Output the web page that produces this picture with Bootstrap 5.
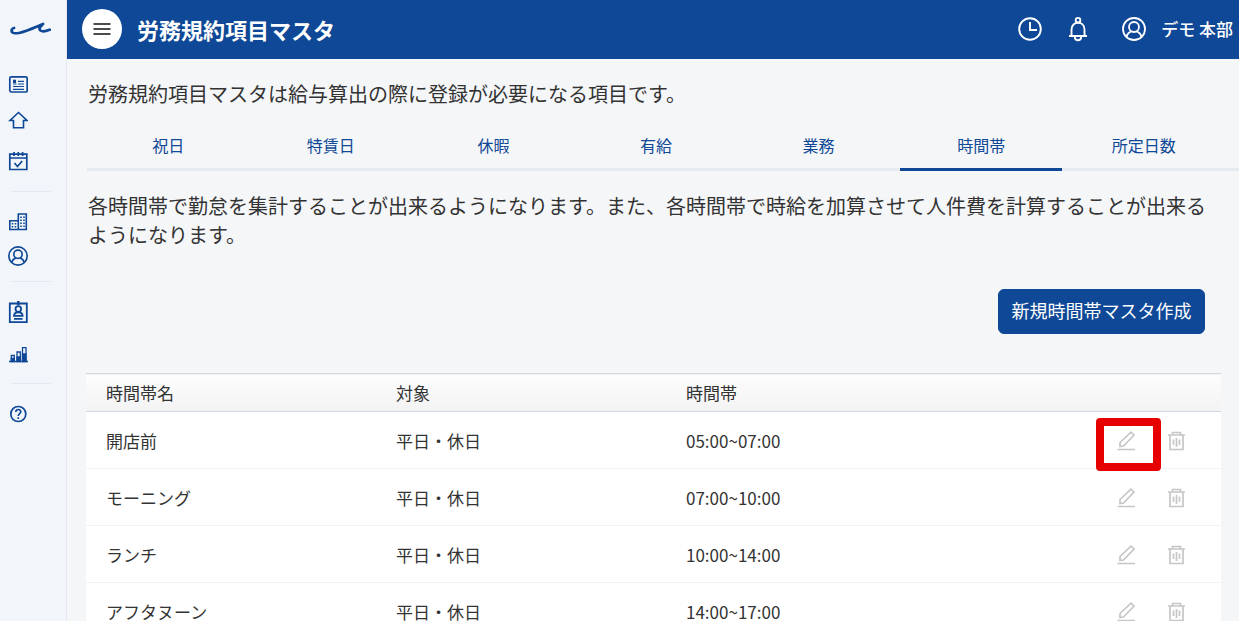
<!DOCTYPE html>
<html lang="ja">
<head>
<meta charset="utf-8">
<meta name="viewport" content="width=device-width, initial-scale=1">
<title>労務規約項目マスタ</title>
<link href="https://cdn.jsdelivr.net/npm/bootstrap@5.3.0/dist/css/bootstrap.min.css" rel="stylesheet">
<style>
  :root { --brand: #0e4896; --ink: #333; --page: #f5f6f8; }
  body { font-family: "Noto Sans CJK JP", "Noto Sans", sans-serif; color: var(--ink); background: var(--page); }
  svg { display: block; fill: none; stroke: currentColor; }

  .side-rail { width: 67px; background: #f2f6fb; border-right: 1px solid #e3e8f3; color: var(--brand); }
  .side-logo { height: 59px; padding: 0 0 2px 10px; color: var(--brand); }
  .side-group { padding: 9px 0 13px 8px; }
  .side-group + .side-group::before { content: ""; height: 1px; background: #e4e8ee; margin: 0 15px 13px 3px; }
  .side-group + .side-group { padding-top: 0; padding-bottom: 8px; }
  .side-group.roomy { padding-bottom: 12px; }
  .side-link { height: 34px; color: var(--brand); }

  .app-bar { height: 59px; background: var(--brand); color: #fff; padding: 0 6px 2px 15px; }
  .menu-btn { width: 40px; height: 40px; background: #fff; color: #111; }
  .app-title { font-size: 22px; line-height: 32px; margin-left: 15px; }
  .bar-btn { color: #fff; }
  .user-btn { font-size: 17px; line-height: 24px; font-weight: 500; gap: 15px; }

  .page-body { scrollbar-width: none; padding-top: 20px; }
  .page-body::-webkit-scrollbar { display: none; }
  .page-text { font-size: 20px; line-height: 29px; padding: 0 30px 0 21px; }
  .master-tabs { margin: 12px 0 20px 20px; padding-right: 14px; border-bottom: 3px solid #e6ebf2; }
  .master-tabs .nav-link { color: var(--brand); font-size: 16px; line-height: 24px; padding: 13px 0 11px; margin-bottom: -3px; border-bottom: 3px solid transparent; border-radius: 0; }
  .master-tabs .nav-link.active { border-bottom-color: var(--brand); }
  .create-row { margin: 40px 34px 39px 0; }
  .create-btn { --bs-btn-color: #fff; --bs-btn-bg: var(--brand); --bs-btn-hover-color: #fff; --bs-btn-hover-bg: #0b3b7c; font-size: 18px; line-height: 25px; padding: 8px 12px 10px; border: 1px solid var(--brand); border-radius: 6px; width: 207px; }

  .zone-wrap { padding: 0 18px 0 19px; }
  .zone-table { font-size: 17px; line-height: 24px; color: var(--ink); background: #fff; table-layout: fixed; width: 100%; }
  .zone-table th { font-weight: 400; padding: 7px 0 6px 20px; }
  .zone-table thead { background: linear-gradient(#fdfdfe, #f3f3f3); border-top: 1px solid #d0d9e4; border-bottom: 1px solid #d0d9e4; }
  .zone-table td { padding: 17px 0 15px 20px; border-bottom: 1px solid #f2f3f5; }
  .zone-col { width: 290px; }
  .row-tools { height: 24px; gap: 30px; padding-right: 35px; }
  .row-btn { color: #c6c6c6; }
  .callout-box { left: -20px; top: -13px; width: 65px; height: 53px; border: 8px solid #e60000; border-radius: 4px; pointer-events: none; }
</style>
</head>
<body>
<svg class="d-none" aria-hidden="true">
  <symbol id="i-user" viewBox="0 0 24 24"><circle cx="12" cy="12" r="11"/><circle cx="12" cy="10" r="5"/><path d="M4.500 20c.8-3.300 2.600-4.900 4.900-5.600M19.500 20c-.8-3.300-2.600-4.900-4.900-5.600"/></symbol>
  <symbol id="i-edit" viewBox="0 0 20 20"><path d="M1.500 18.500h17.500M4 15.500v-4L15 1.200l3 2.800L7.500 15z"/></symbol>
  <symbol id="i-trash" viewBox="0 0 20 20"><path d="M2 4h17M6.500 3.700V1.500h8v2.200M4 4v14.500h13V4M7.500 8.500v5.500M10.500 7v9M13.500 8.500v5.500"/></symbol>
</svg>
<div class="d-flex vh-100 overflow-hidden">
  <nav class="side-rail flex-shrink-0 d-flex flex-column" aria-label="サイドメニュー">
    <a href="#" class="side-logo d-flex align-items-center" aria-label="トップ">
      <svg width="42" height="16" viewBox="0 0 42 16" stroke-width="2.800" stroke-linecap="round" stroke-linejoin="round"><path d="M4 7C1.500 7.500 1 10 2.500 11.500c2.500 2 8 .3 14-1.800C23 7.300 29 5 33 3c-2 2-5 4.300-2.500 6.500 2 1.500 6 .5 9.200-.7"/></svg>
    </a>
    <div class="side-group d-flex flex-column">
      <a href="#" class="side-link d-flex align-items-center" aria-label="お知らせ">
        <svg width="20" height="20" viewBox="0 0 20 20" stroke-width="1.700"><rect x="1.800" y="1.800" width="17.400" height="15.200" rx="1.500"/><path d="M5 11.500h11M5 14.300h11M10 6.300h6M5 9h3.500M10 9h6" stroke-width="1.200"/><path d="M5 4.700h3v3.300H5z" fill="currentColor" stroke="none"/></svg>
      </a>
      <a href="#" class="side-link d-flex align-items-center" aria-label="ホーム">
        <svg width="20" height="20" viewBox="0 0 20 20" stroke-width="1.600"><path d="M10.500 3.500 2 11.500h3.500v7.300h10v-7.300H19z"/></svg>
      </a>
      <a href="#" class="side-link d-flex align-items-center mt-2" aria-label="スケジュール">
        <svg width="20" height="20" viewBox="0 0 20 20" stroke-width="1.700"><path d="M1.800 3.200h17v15.300h-17zM2 7h16.500M6 1v4M10.300 1v4M14.600 1v4M6.500 12l3 3.500 4.700-5.500"/></svg>
      </a>
    </div>
    <div class="side-group d-flex flex-column">
      <a href="#" class="side-link d-flex align-items-center" aria-label="店舗">
        <svg width="20" height="20" viewBox="0 0 20 20" stroke-width="1.600"><path d="M1.800 8.800h8.500v8.700H1.800zM10.300 2h8v15.500h-8zM1 17.500h18"/><path d="M4.500 11v5M7.500 11v5M13 4.500v11M16 4.500v11" stroke-dasharray="1.500 1.500"/></svg>
      </a>
      <a href="#" class="side-link d-flex align-items-center" aria-label="アカウント">
        <svg width="20" height="20" stroke-width="2"><use href="#i-user"/></svg>
      </a>
    </div>
    <div class="side-group roomy d-flex flex-column">
      <a href="#" class="side-link d-flex align-items-center" aria-label="従業員">
        <svg width="20" height="24" viewBox="0 0 20 24" stroke-width="1.800"><path d="M1.800 3.500h17v18.700h-17z"/><circle cx="10.300" cy="9" r="2.800"/><path d="M6 15.800c0-2.200 1.600-3.500 4.300-3.500s4.300 1.300 4.300 3.500zM6 18.800h8.600"/><path d="M10.300 1v4" stroke-width="2.500"/></svg>
      </a>
      <a href="#" class="side-link d-flex align-items-center mt-2" aria-label="分析">
        <svg width="20" height="20" viewBox="0 0 20 20" stroke-width="1.300"><path d="M1 17.500h19M3.300 11.500h3v6h-3zM9 8h3.300v9.500H9zM14.500 3.700h3.500v13.800h-3.500z"/><path d="M3.300 14.500h3v3h-3zM9 13h3.300v4.500H9zM14.500 10h3.500v7.500h-3.500z" fill="currentColor"/></svg>
      </a>
    </div>
    <div class="side-group d-flex flex-column">
      <a href="#" class="side-link d-flex align-items-center" aria-label="ヘルプ">
        <svg width="20" height="20" viewBox="0 0 20 20" stroke-width="1.700"><circle cx="10.300" cy="10" r="7.500"/><path d="M7.800 8c0-3.300 5-3.200 5-.3 0 2-2.500 1.900-2.500 4.300M10.300 13.300V15"/></svg>
      </a>
    </div>
  </nav>

  <div class="flex-grow-1 d-flex flex-column overflow-hidden">
    <header class="app-bar flex-shrink-0 d-flex align-items-center">
      <button type="button" class="menu-btn btn rounded-circle border-0 p-0 d-flex align-items-center justify-content-center" aria-label="メニュー">
        <svg width="18" height="14" viewBox="0 0 18 14" stroke-width="1.500"><path d="M.5 2h17M.5 7h17M.5 12h17"/></svg>
      </button>
      <h1 class="app-title fw-bold mb-0">労務規約項目マスタ</h1>
      <div class="ms-auto d-flex align-items-center">
        <button type="button" class="bar-btn btn border-0 p-0 me-4" aria-label="履歴">
          <svg width="24" height="24" viewBox="0 0 24 24" stroke-width="1.900"><circle cx="12" cy="12" r="10.800"/><path d="M12 5v8h7"/></svg>
        </button>
        <button type="button" class="bar-btn btn border-0 p-0 me-4" aria-label="通知">
          <svg width="24" height="26" viewBox="0 0 24 26" stroke-width="1.900"><circle cx="12" cy="4.200" r="2.300"/><path d="M3 20h18M5.500 20v-6.500c0-9 13-9 13 0V20M8.800 20.500c0 5 6.400 5 6.400 0"/></svg>
        </button>
        <button type="button" class="bar-btn user-btn btn border-0 p-0 ms-2 d-flex align-items-center">
          <svg width="24" height="24" stroke-width="1.800"><use href="#i-user"/></svg>
          <span>デモ 本部</span>
        </button>
      </div>
    </header>

    <main class="page-body flex-grow-1 overflow-auto">
      <p class="page-text mb-0">労務規約項目マスタは給与算出の際に登録が必要になる項目です。</p>
      <ul class="master-tabs nav nav-fill nav-justified">
        <li class="nav-item"><a class="nav-link" href="#">祝日</a></li>
        <li class="nav-item"><a class="nav-link" href="#">特賃日</a></li>
        <li class="nav-item"><a class="nav-link" href="#">休暇</a></li>
        <li class="nav-item"><a class="nav-link" href="#">有給</a></li>
        <li class="nav-item"><a class="nav-link" href="#">業務</a></li>
        <li class="nav-item"><a class="nav-link active" aria-current="page" href="#">時間帯</a></li>
        <li class="nav-item"><a class="nav-link" href="#">所定日数</a></li>
      </ul>
      <p class="page-text mb-0">各時間帯で勤怠を集計することが出来るようになります。また、各時間帯で時給を加算させて人件費を計算することが出来るようになります。</p>
      <div class="create-row d-flex justify-content-end">
        <button type="button" class="create-btn btn">新規時間帯マスタ作成</button>
      </div>
      <div class="zone-wrap">
        <table class="zone-table">
          <colgroup><col class="zone-col"><col class="zone-col"><col><col class="zone-col"></colgroup>
          <thead>
            <tr><th scope="col">時間帯名</th><th scope="col">対象</th><th scope="col">時間帯</th><th scope="col" aria-label="操作"></th></tr>
          </thead>
          <tbody id="zones"></tbody>
        </table>
      </div>
    </main>
  </div>
</div>
<script src="https://cdn.jsdelivr.net/npm/bootstrap@5.3.0/dist/js/bootstrap.bundle.min.js"></script>
<script>
  const zones = [
    ["開店前", "平日・休日", "05:00~07:00"],
    ["モーニング", "平日・休日", "07:00~10:00"],
    ["ランチ", "平日・休日", "10:00~14:00"],
    ["アフタヌーン", "平日・休日", "14:00~17:00"]
  ];
  document.getElementById("zones").innerHTML = zones.map(([name, days, time], i) => `
    <tr><td>${name}</td><td>${days}</td><td>${time}</td>
      <td><div class="row-tools d-flex justify-content-end align-items-center">
        <div class="position-relative d-flex">
          <button type="button" class="row-btn btn border-0 p-0" aria-label="編集"><svg width="20" height="20" stroke-width="1.700"><use href="#i-edit"/></svg></button>
          ${i === 0 ? '<span class="callout-box position-absolute"></span>' : ""}
        </div>
        <button type="button" class="row-btn btn border-0 p-0" aria-label="削除"><svg width="20" height="20" stroke-width="1.700"><use href="#i-trash"/></svg></button>
      </div></td></tr>`).join("");
</script>
</body>
</html>
